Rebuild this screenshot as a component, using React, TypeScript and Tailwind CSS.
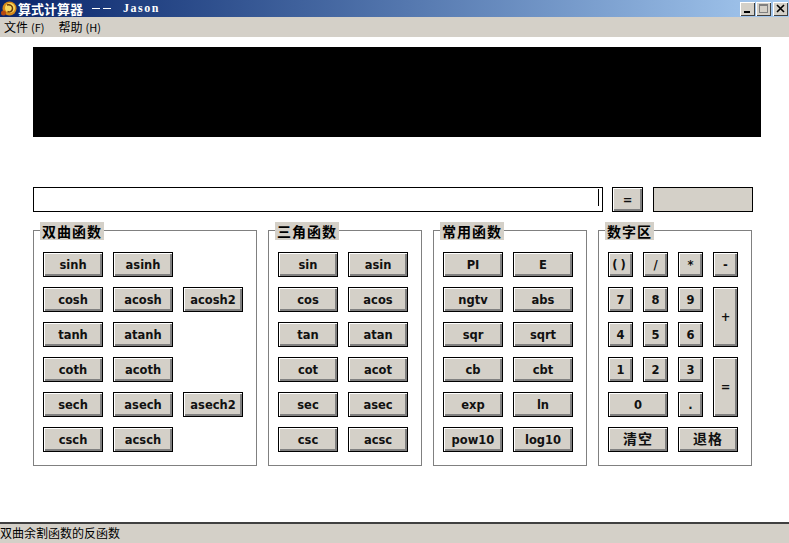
const cjk = '"Noto Sans CJK SC", sans-serif';
const btnFont = '"DejaVu Sans", "Noto Sans CJK SC", sans-serif';

function Btn({ label, className = '' }: { label: string; className?: string }) {
  return (
    <button
      className={`flex items-center justify-center bg-[#d4d0c8] border border-black pt-[2px] shadow-[inset_1px_1px_0_#ffffff,inset_-2px_-2px_0_#808080] text-[11.5px] font-bold text-[#111] ${className}`}
      style={{ fontFamily: btnFont }}
    >
      {label}
    </button>
  );
}

function Group({ title, className, children }: { title: string; className: string; children: React.ReactNode }) {
  return (
    <div className={`relative h-[236px] border border-[#808080] pt-[21px] pl-[9px] ${className}`}>
      <span
        className="absolute left-[6px] top-[-9px] h-[18px] px-[2px] bg-[#d4d0c8] text-[14px] leading-[18px] font-bold text-black tracking-[1px]"
        style={{ fontFamily: cjk }}
      >
        {title}
      </span>
      {children}
    </div>
  );
}

function WinBtn({ children }: { children: React.ReactNode }) {
  return (
    <div className="flex h-[14px] w-[15px] items-center justify-center bg-[#d4d0c8] shadow-[inset_1px_1px_0_#ffffff,inset_-1px_-1px_0_#404040]">
      {children}
    </div>
  );
}

const funcs = 'grid grid-cols-[60px_60px_60px] auto-rows-[25px] gap-x-[10px] gap-y-[10px]';
const funcs2 = 'grid grid-cols-[60px_60px] auto-rows-[25px] gap-x-[10px] gap-y-[10px]';

export default function App() {
  return (
    <div className="flex h-[543px] w-[789px] flex-col overflow-hidden bg-white" style={{ fontFamily: cjk }}>
      {/* title bar */}
      <div className="flex h-[17px] items-center justify-between bg-gradient-to-r from-[#0a246a] to-[#a6caf0] pr-[1px]">
        <div className="flex items-center">
          <svg width="18" height="17" viewBox="0 0 18 17">
            <circle cx="9.5" cy="8.5" r="7" fill="#d88a18" />
            <circle cx="10" cy="8" r="5" fill="#f8d860" />
            <path d="M7 5 C10 4 13 6 12.5 9 C12 11.5 9.5 12.5 7.5 11.5" fill="none" stroke="#6a3808" strokeWidth="1.5" />
            <circle cx="3.5" cy="13" r="2.5" fill="#b84a10" />
          </svg>
          <span className="text-[13px] leading-[17px] font-bold text-white">算式计算器</span>
          <span className="ml-[9px] flex gap-[3px]">
            <span className="h-[1px] w-[8px] bg-white" />
            <span className="h-[1px] w-[8px] bg-white" />
          </span>
          <span
            className="ml-[12px] text-[12px] leading-[17px] font-bold text-white tracking-[1.5px]"
            style={{ fontFamily: '"Liberation Serif", serif' }}
          >
            Jason
          </span>
        </div>
        <div className="flex items-center">
          <WinBtn>
            <div className="mt-[7px] mr-[2px] h-[2px] w-[6px] bg-black" />
          </WinBtn>
          <div className="ml-[1px]">
            <WinBtn>
              <div className="h-[9px] w-[9px] border border-[#808080] border-t-2" />
            </WinBtn>
          </div>
          <div className="ml-[2px]">
            <WinBtn>
              <svg width="9" height="9" viewBox="0 0 9 9">
                <path d="M1 1 L8 8 M8 1 L1 8" stroke="#000" strokeWidth="1.6" />
              </svg>
            </WinBtn>
          </div>
        </div>
      </div>

      {/* menu bar */}
      <div className="flex h-[20px] items-center gap-[14px] bg-[#d4d0c8] pl-[4px] text-[12px] text-black">
        <span>文件<span className="ml-[3px] text-[11px]">(F)</span></span>
        <span>帮助<span className="ml-[3px] text-[11px]">(H)</span></span>
      </div>

      <div className="flex-1 pl-[33px] pt-[10px]">
        {/* display */}
        <div className="h-[90px] w-[728px] bg-black" />

        {/* input row */}
        <div className="mt-[50px] flex h-[25px]">
          <div className="relative w-[570px] border border-black bg-white">
            <div className="absolute right-[3px] top-[1px] h-[17px] w-[1px] bg-black" />
          </div>
          <Btn label="=" className="ml-[9px] w-[31px]" />
          <div className="ml-[10px] w-[100px] border border-black bg-[#d4d0c8]" />
        </div>

        {/* groups */}
        <div className="mt-[18px] flex gap-[11px]">
          <Group title="双曲函数" className="w-[224px]">
            <div className={funcs}>
              <Btn label="sinh" />
              <Btn label="asinh" />
              <div />
              <Btn label="cosh" />
              <Btn label="acosh" />
              <Btn label="acosh2" />
              <Btn label="tanh" />
              <Btn label="atanh" />
              <div />
              <Btn label="coth" />
              <Btn label="acoth" />
              <div />
              <Btn label="sech" />
              <Btn label="asech" />
              <Btn label="asech2" />
              <Btn label="csch" />
              <Btn label="acsch" />
            </div>
          </Group>

          <Group title="三角函数" className="w-[154px]">
            <div className={funcs2}>
              {['sin', 'asin', 'cos', 'acos', 'tan', 'atan', 'cot', 'acot', 'sec', 'asec', 'csc', 'acsc'].map(f => (
                <Btn key={f} label={f} />
              ))}
            </div>
          </Group>

          <Group title="常用函数" className="w-[154px]">
            <div className={funcs2}>
              {['PI', 'E', 'ngtv', 'abs', 'sqr', 'sqrt', 'cb', 'cbt', 'exp', 'ln', 'pow10', 'log10'].map(f => (
                <Btn key={f} label={f} />
              ))}
            </div>
          </Group>

          <Group title="数字区" className="w-[154px]">
            <div className="grid grid-cols-[25px_25px_25px_25px] auto-rows-[25px] gap-x-[10px] gap-y-[10px]">
              <Btn label="()" className="tracking-[3px]" />
              <Btn label="/" />
              <Btn label="*" />
              <Btn label="-" />
              <Btn label="7" />
              <Btn label="8" />
              <Btn label="9" />
              <Btn label="+" className="row-span-2" />
              <Btn label="4" />
              <Btn label="5" />
              <Btn label="6" />
              <Btn label="1" />
              <Btn label="2" />
              <Btn label="3" />
              <Btn label="=" className="row-span-2" />
              <Btn label="0" className="col-span-2" />
              <Btn label="." />
              <Btn label="清空" className="col-span-2 !pt-0 text-[14px] tracking-[1px]" />
              <Btn label="退格" className="col-span-2 !pt-0 text-[14px] tracking-[1px]" />
            </div>
          </Group>
        </div>
      </div>

      {/* status bar */}
      <div className="h-[21px] border-t-2 border-[#404040] bg-[#d4d0c8] text-[12px] leading-[18px] text-black">
        双曲余割函数的反函数
      </div>
    </div>
  );
}
